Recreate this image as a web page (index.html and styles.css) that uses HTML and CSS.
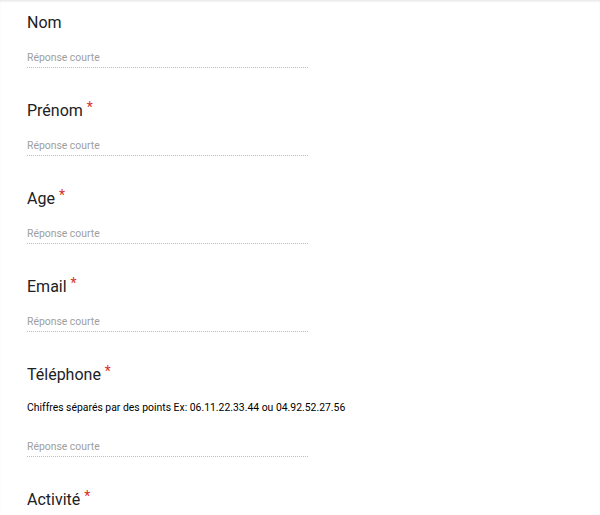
FILE: index.html
```html
<!DOCTYPE html>
<html lang="fr">
<head>
    <meta charset="UTF-8">
    <meta name="viewport" content="width=device-width, initial-scale=1.0">
    <title>Formulaire</title>
    <link rel="stylesheet" href="styles.css">
</head>
<body>
    <div class="form">
        <div class="question">
            <div class="title">Nom</div>
            <div class="answer">Réponse courte</div>
        </div>
        <div class="question">
            <div class="title">Prénom <span class="req">*</span></div>
            <div class="answer">Réponse courte</div>
        </div>
        <div class="question">
            <div class="title">Age <span class="req">*</span></div>
            <div class="answer">Réponse courte</div>
        </div>
        <div class="question">
            <div class="title">Email <span class="req">*</span></div>
            <div class="answer">Réponse courte</div>
        </div>
        <div class="question">
            <div class="title">Téléphone <span class="req">*</span></div>
            <div class="help">Chiffres séparés par des points Ex: 06.11.22.33.44 ou 04.92.52.27.56</div>
            <div class="answer">Réponse courte</div>
        </div>
        <div class="question">
            <div class="title">Activité <span class="req">*</span></div>
        </div>
    </div>
</body>
</html>
```

FILE: styles.css
```css
body {
    margin: 0;
    background: #fff;
    font-family: Roboto, "Liberation Sans", Arial, sans-serif;
    overflow: hidden;
}
.form {
    padding: 10px 0 0 27px;
    border-top: 1px solid #ececec;
    box-shadow: inset 0 1px 2px rgba(0, 0, 0, 0.06);
}
.question {
    margin-bottom: 31px;
}
.title {
    font-size: 16px;
    line-height: 24px;
    color: #202124;
}
.req {
    color: #d93025;
    font-size: 14px;
    vertical-align: top;
    line-height: 16px;
}
.help {
    margin-top: 13px;
    font-size: 10.4px;
    line-height: 16px;
    color: #000;
}
.answer {
    margin-top: 15px;
    width: 281px;
    font-size: 10.4px;
    line-height: 16px;
    color: #9e9e9e;
    padding-bottom: 1px;
    border-bottom: 1px dotted #bdbdbd;
}
.help + .answer {
    margin-top: 23px;
}
```
